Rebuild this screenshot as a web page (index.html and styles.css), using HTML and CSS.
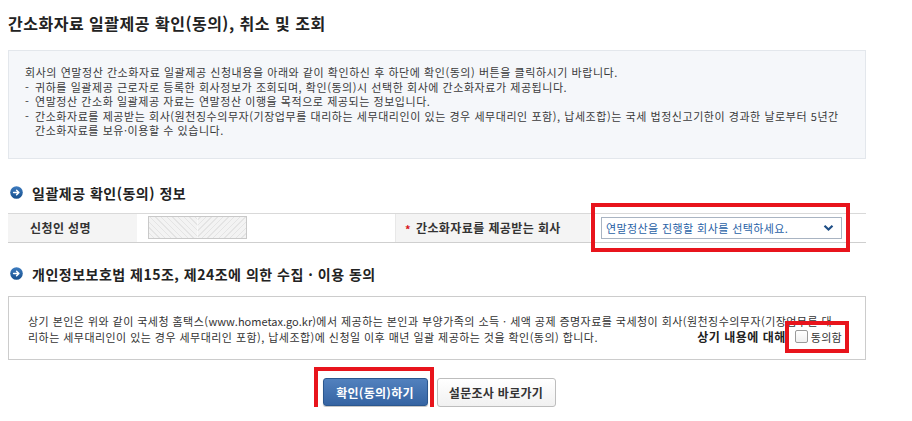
FILE: index.html
```html
<!DOCTYPE html>
<html lang="ko">
<head>
<meta charset="utf-8">
<title>간소화자료 일괄제공 확인(동의), 취소 및 조회</title>
<link rel="stylesheet" href="styles.css">
</head>
<body>
<div class="page">
  <h1 class="title">간소화자료 일괄제공 확인(동의), 취소 및 조회</h1>

  <div class="info">
    <p>회사의 연말정산 간소화자료 일괄제공 신청내용을 아래와 같이 확인하신 후 하단에 확인(동의) 버튼을 클릭하시기 바랍니다.</p>
    <p class="item"><span class="dash">-</span>귀하를 일괄제공 근로자로 등록한 회사정보가 조회되며, 확인(동의)시 선택한 회사에 간소화자료가 제공됩니다.</p>
    <p class="item"><span class="dash">-</span>연말정산 간소화 일괄제공 자료는 연말정산 이행을 목적으로 제공되는 정보입니다.</p>
    <p class="item"><span class="dash">-</span>간소화자료를 제공받는 회사(원천징수의무자(기장업무를 대리하는 세무대리인이 있는 경우 세무대리인 포함), 납세조합)는 국세 법정신고기한이 경과한 날로부터 5년간<br>간소화자료를 보유·이용할 수 있습니다.</p>
  </div>

  <h2 class="sub"><span class="bullet"><svg width="13" height="13" viewBox="0 0 13 13"><defs><linearGradient id="bg1" x1="0" y1="0" x2="0" y2="1"><stop offset="0" stop-color="#3d7cc0"/><stop offset="1" stop-color="#174f8c"/></linearGradient></defs><circle cx="6.5" cy="6.5" r="6.3" fill="url(#bg1)"/><path d="M3.6 6.5h5.2M6.6 4.2l2.3 2.3-2.3 2.3" stroke="#fff" stroke-width="1.5" fill="none" stroke-linecap="round" stroke-linejoin="round"/></svg></span>일괄제공 확인(동의) 정보</h2>

  <div class="row">
    <div class="th th1">신청인 성명</div>
    <div class="td td1"><span class="masked"></span></div>
    <div class="th th2"><span class="req">*</span>간소화자료를 제공받는 회사</div>
    <div class="td td2">
      <div class="select marked-select">
        <span class="sel-text">연말정산을 진행할 회사를 선택하세요.</span>
        <svg class="sel-arrow" width="11" height="8" viewBox="0 0 11 8"><path d="M1.5 1.8l4 3.8 4-3.8" stroke="#1f4f86" stroke-width="2.2" fill="none"/></svg>
      </div>
    </div>
  </div>

  <h2 class="sub sub2"><span class="bullet"><svg width="13" height="13" viewBox="0 0 13 13"><defs><linearGradient id="bg2" x1="0" y1="0" x2="0" y2="1"><stop offset="0" stop-color="#3d7cc0"/><stop offset="1" stop-color="#174f8c"/></linearGradient></defs><circle cx="6.5" cy="6.5" r="6.3" fill="url(#bg2)"/><path d="M3.6 6.5h5.2M6.6 4.2l2.3 2.3-2.3 2.3" stroke="#fff" stroke-width="1.5" fill="none" stroke-linecap="round" stroke-linejoin="round"/></svg></span>개인정보보호법 제15조, 제24조에 의한 수집 · 이용 동의</h2>

  <div class="agree-box">
    <p>상기 본인은 위와 같이 국세청 홈택스(<span class="latin">www.hometax.go.kr</span>)에서 제공하는 본인과 부양가족의 소득 · 세액 공제 증명자료를 국세청이 회사(원천징수의무자(기장업무를 대<br>리하는 세무대리인이 있는 경우 세무대리인 포함), 납세조합)에 신청일 이후 매년 일괄 제공하는 것을 확인(동의) 합니다.<span class="agree"><strong>상기 내용에 대해</strong><label class="chk marked-chk"><input type="checkbox" class="cb">동의함</label></span></p>
  </div>

  <div class="buttons">
    <button class="btn primary marked-btn" type="button">확인(동의)하기</button>
    <button class="btn secondary" type="button">설문조사 바로가기</button>
  </div>
</div>
</body>
</html>
```

FILE: styles.css
```css
* { box-sizing: border-box; }
html, body { margin: 0; padding: 0; background: #fff; }
body {
  font-family: "Noto Sans CJK KR", "Noto Sans", sans-serif;
  font-size: 11px;
  color: #333;
}
.page {
  width: 866px;
  padding-left: 8px;
}
p { margin: 0; }

.title {
  margin: 13px 0 0;
  font-size: 16px;
  line-height: 20px;
  font-weight: 700;
  color: #222;
  letter-spacing: 0.5px;
}

.info {
  margin-top: 17px;
  background: #f5f7fa;
  border: 1px solid #e3e7ec;
  padding: 14px 10px 20px 16px;
  line-height: 14.5px;
  color: #3a3a3a;
  letter-spacing: 0.55px;
}
.item {
  padding-left: 10px;
  text-indent: -10px;
}
.dash {
  display: inline-block;
  width: 10px;
  text-indent: 0;
  letter-spacing: 0;
}

.sub {
  margin: 24px 0 10px;
  font-size: 14px;
  line-height: 20px;
  font-weight: 700;
  color: #222;
  display: flex;
  align-items: center;
  letter-spacing: 0.5px;
}
.sub2 { margin-top: 21px; margin-bottom: 12px; }
.bullet {
  display: inline-flex;
  width: 13px;
  height: 13px;
  margin: 0 9px 0 2px;
}

.row {
  display: flex;
  height: 30px;
  border-top: 1px solid #d9d9d9;
  border-bottom: 1px solid #cfcfcf;
}
.th {
  background: #f4f4f4;
  font-size: 12px;
  font-weight: 700;
  color: #333;
  display: flex;
  align-items: center;
  letter-spacing: 0.4px;
}
.th1 { width: 129px; padding-left: 22px; }
.th2 { width: 195px; padding-left: 9px; border-left: 1px solid #e8e8e8; }
.td { display: flex; align-items: center; background: #fff; }
.td1 { width: 258px; padding-left: 11px; }
.td2 { flex: 1; padding-left: 11px; }
.req {
  color: #d8141c;
  font-size: 11px;
  margin-right: 5px;
  position: relative;
  top: 1px;
}
.masked {
  display: block;
  width: 99px;
  height: 23px;
  border: 1px solid #c9c9c9;
  background:
    repeating-linear-gradient(45deg, #f3f3f3 0 3px, #e4e4e4 3px 4px) left / 50% 100% no-repeat,
    repeating-linear-gradient(-45deg, #f3f3f3 0 3px, #e4e4e4 3px 4px) right / 50% 100% no-repeat;
}

.select {
  width: 241px;
  height: 22px;
  border: 1px solid #a9b4c2;
  background: #fff;
  display: flex;
  align-items: center;
  justify-content: space-between;
  padding: 0 7px 0 4px;
  color: #2a62a6;
  font-size: 11px;
  letter-spacing: 0.4px;
  position: relative;
}
.sel-arrow { display: block; }

.agree-box {
  border: 1px solid #cccccc;
  padding: 16px 12px 14px 19px;
  line-height: 16px;
  color: #333;
  letter-spacing: 0.45px;
}
.latin { letter-spacing: 0; }
.agree {
  float: right;
  display: inline-flex;
  align-items: center;
  letter-spacing: 0;
  margin-right: 11px;
}
.agree strong {
  font-size: 12px;
  font-weight: 700;
  color: #222;
  margin-right: 9px;
  letter-spacing: 0.5px;
}
.chk {
  display: inline-flex;
  align-items: center;
  position: relative;
  letter-spacing: 0.3px;
}
.cb {
  appearance: none;
  -webkit-appearance: none;
  width: 13px;
  height: 13px;
  margin: 0 3px 0 0;
  border: 1px solid #9a9a9a;
  border-radius: 2px;
  background: linear-gradient(#fff, #f0f0f0);
}

.buttons {
  margin-top: 18px;
  display: flex;
  justify-content: center;
  align-items: center;
  gap: 9px;
  padding-left: 4px;
}
.btn {
  font-family: "Noto Sans CJK KR", "Noto Sans", sans-serif;
  font-size: 12px;
  font-weight: 700;
  border-radius: 3px;
  cursor: pointer;
  padding: 0;
  letter-spacing: 0.3px;
}
.primary {
  width: 105px;
  height: 28px;
  color: #fff;
  border: 1px solid #2b578e;
  background: linear-gradient(#5281be, #3564a3);
  position: relative;
  box-shadow: 0 1px 1px rgba(0,0,0,0.25);
}
.secondary {
  width: 119px;
  height: 29px;
  color: #333;
  border: 1px solid #bdbdbd;
  background: linear-gradient(#ffffff, #f1f1f1);
}

/* red annotation frames drawn over the target controls */
.marked-select::after,
.marked-chk::after,
.marked-btn::after {
  content: "";
  position: absolute;
  border: 4px solid #e8141c;
  pointer-events: none;
}
.marked-select::after { top: -15px; left: -11px; right: -9px; bottom: -14px; }
.marked-chk::after { top: -8px; left: -10px; right: -7px; bottom: -8px; }
.marked-btn::after { top: -12px; left: -10px; right: -7px; bottom: -9px; }
```
